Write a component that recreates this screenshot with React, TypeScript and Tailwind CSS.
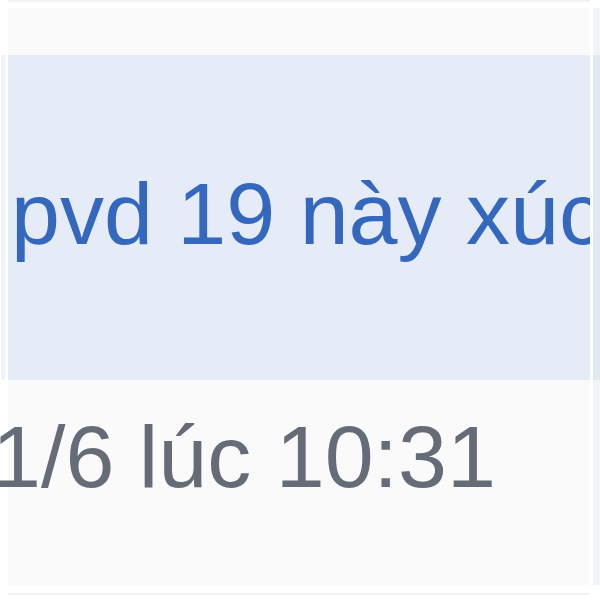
export default function App() {
  return (
    <div
      className="w-[600px] h-[600px] bg-white overflow-hidden flex flex-col"
      style={{ fontFamily: '"Liberation Sans", Arial, sans-serif' }}
    >
      <div className="h-[2px] ml-[8px] w-[582px] bg-[#f1f2f4] shrink-0" />
      <div className="h-[6px] shrink-0" />
      <div className="flex flex-row h-[577px] shrink-0">
        <div className="w-[8px] shrink-0 flex flex-col">
          <div className="h-[47px]" />
          <div className="h-[325px] flex flex-row">
            <div className="w-[1px]" />
            <div className="w-[4px] bg-[#eef2f9]" />
          </div>
        </div>
        <div className="w-[582px] shrink-0 bg-[#fafafa] flex flex-col">
          <div className="h-[47px] shrink-0" />
          <div className="h-[325px] shrink-0 bg-[#e6ecf7] pt-[115px] pl-[3px] whitespace-nowrap">
            <div className="text-[88px] leading-[88px] text-[#3468bf]">pvd 19 này xúc</div>
          </div>
          <div className="pt-[33px] whitespace-nowrap">
            <div className="ml-[-16px] text-[88px] leading-[88px] text-[#656c78]">1/6 lúc 10:31</div>
          </div>
        </div>
        <div className="w-[3px] shrink-0 bg-white" />
        <div className="w-[7px] shrink-0 flex flex-col bg-[#f3f4f6]">
          <div className="h-[47px]" />
          <div className="h-[325px] bg-[#e2e8f1]" />
        </div>
      </div>
      <div className="h-[8px] shrink-0" />
      <div className="h-[2px] ml-[8px] w-[582px] bg-[#f1f2f4] shrink-0" />
    </div>
  );
}
